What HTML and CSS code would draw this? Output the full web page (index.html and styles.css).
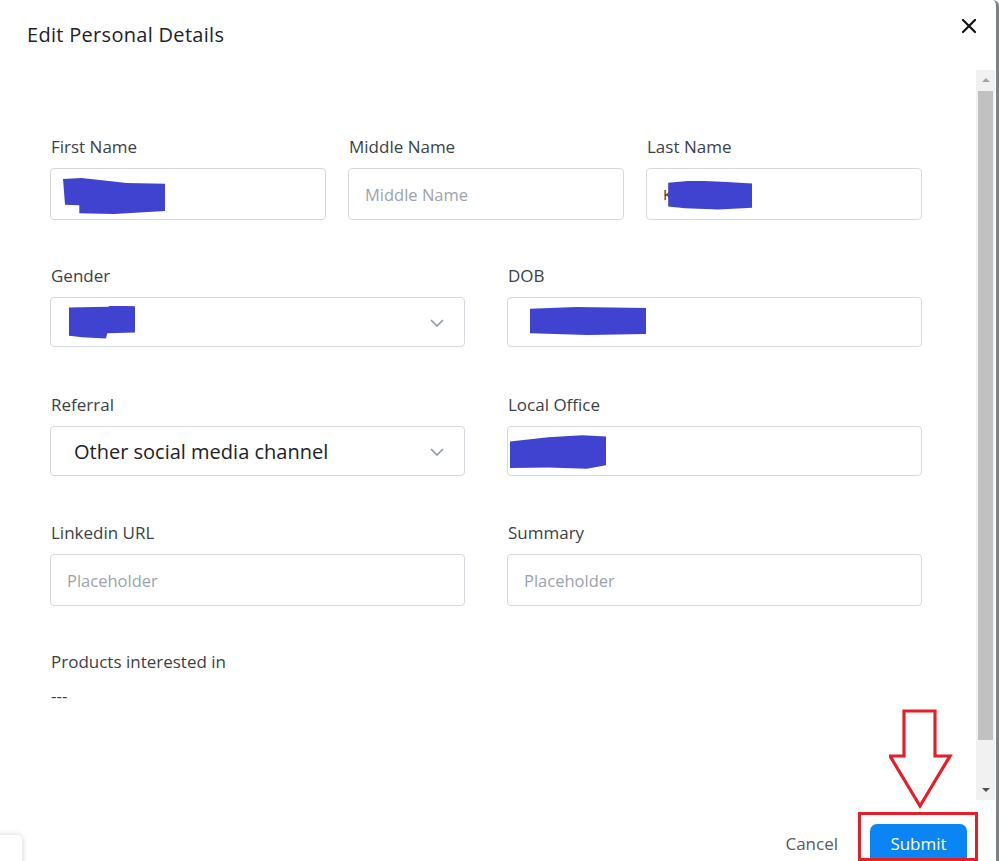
FILE: index.html
```html
<!DOCTYPE html>
<html>
<head>
<meta charset="utf-8">
<link rel="stylesheet" href="styles.css">
</head>
<body>
<div class="modal">
  <div class="modal-header">
    <h1 class="title">Edit Personal Details</h1>
    <button class="close" aria-label="Close">
      <svg width="14" height="14" viewBox="0 0 14 14"><path d="M1 1L13 13M13 1L1 13" stroke="#111" stroke-width="2.2" stroke-linecap="square"/></svg>
    </button>
  </div>
  <div class="modal-body">
    <div class="content">
      <div class="row row-3 gap-a">
        <div class="field">
          <label class="label">First Name</label>
          <div class="box"><span class="redact r-first"></span></div>
        </div>
        <div class="field">
          <label class="label">Middle Name</label>
          <div class="box"><span class="placeholder">Middle Name</span></div>
        </div>
        <div class="field">
          <label class="label">Last Name</label>
          <div class="box"><span class="glyph">K</span><span class="redact r-last"></span></div>
        </div>
      </div>
      <div class="row row-2 gap-b">
        <div class="field">
          <label class="label">Gender</label>
          <div class="box box-short select"><span class="redact r-gender"></span><svg class="chev" width="14" height="8" viewBox="0 0 14 8"><path d="M1 1L7 7L13 1" fill="none" stroke="#8e97a1" stroke-width="1.6"/></svg></div>
        </div>
        <div class="field">
          <label class="label">DOB</label>
          <div class="box box-short"><span class="redact r-dob"></span></div>
        </div>
      </div>
      <div class="row row-2 gap-c">
        <div class="field">
          <label class="label">Referral</label>
          <div class="box box-short select"><span class="value">Other social media channel</span><svg class="chev" width="14" height="8" viewBox="0 0 14 8"><path d="M1 1L7 7L13 1" fill="none" stroke="#8e97a1" stroke-width="1.6"/></svg></div>
        </div>
        <div class="field">
          <label class="label">Local Office</label>
          <div class="box box-short box-tight"><span class="redact r-office"></span></div>
        </div>
      </div>
      <div class="row row-2 gap-a">
        <div class="field">
          <label class="label">Linkedin URL</label>
          <div class="box"><span class="placeholder">Placeholder</span></div>
        </div>
        <div class="field">
          <label class="label">Summary</label>
          <div class="box"><span class="placeholder">Placeholder</span></div>
        </div>
      </div>
      <div class="field products">
        <label class="label">Products interested in</label>
        <div class="dashes">---</div>
      </div>
    </div>
    <div class="scrollbar">
      <div class="sb-btn"><span class="tri-up"></span></div>
      <div class="sb-track"><div class="sb-thumb"></div></div>
      <div class="sb-btn"><span class="tri-down"></span></div>
    </div>
  </div>
  <div class="modal-footer">
    <button class="btn-cancel">Cancel</button>
    <button class="btn-submit">Submit</button>
  </div>

  <svg class="annot-arrow" width="70" height="104" viewBox="0 0 70 104">
    <path d="M15 3H46V48H61L31 98L1 48H15Z" fill="none" stroke="#e61e28" stroke-width="3.2" stroke-linejoin="miter"/>
  </svg>
  <div class="annot-box"></div>
  <div class="corner-card"></div>
</div>
</body>
</html>
```

FILE: styles.css
```css
* { box-sizing: border-box; }
html, body { margin: 0; padding: 0; }
body {
  width: 999px;
  height: 861px;
  overflow: hidden;
  background: #ffffff;
  font-family: "Open Sans", "Noto Sans", sans-serif;
  color: #3a3e45;
}
.modal {
  position: relative;
  width: 999px;
  height: 861px;
  display: flex;
  flex-direction: column;
  border-right: 3px solid #7f8082;
  border-top-right-radius: 6px;
  background: #fff;
  overflow: hidden;
}
.modal-header {
  flex: none;
  height: 70px;
  display: flex;
  justify-content: space-between;
  align-items: flex-start;
  padding: 0 20px 0 27px;
}
.title {
  margin: 23px 0 0;
  font-size: 20px;
  line-height: 24px;
  font-weight: 500;
  letter-spacing: 0.3px;
  color: #1e222b;
}
.close {
  margin-top: 19px;
  padding: 0;
  border: 0;
  background: none;
  width: 14px;
  height: 14px;
  display: flex;
}
.modal-body {
  flex: none;
  height: 730px;
  display: flex;
}
.content {
  flex: 1;
  padding: 66px 0 0 50px;
}
.row {
  display: grid;
  width: 872px;
}
.gap-a { margin-bottom: 45px; }
.gap-b { margin-bottom: 47px; }
.gap-c { margin-bottom: 46px; }
.row-3 { grid-template-columns: repeat(3, 276px); column-gap: 22px; }
.row-2 { grid-template-columns: repeat(2, 415px); column-gap: 42px; }
.field { display: flex; flex-direction: column; }
.label {
  font-size: 17px;
  line-height: 22px;
  color: #3b3f47;
  margin: 0 0 10px 1px;
}
.box {
  height: 52px;
  border: 1px solid #d5d9de;
  border-radius: 4px;
  display: flex;
  align-items: center;
  padding: 0 14px 0 12px;
  position: relative;
}
.box-short { height: 50px; }
.box-tight { padding-left: 2px; }
.select { justify-content: space-between; padding-right: 20px; }
.placeholder {
  font-size: 16.5px;
  color: #9ba3ad;
  padding-left: 4px;
}
.value {
  font-size: 20px;
  color: #202226;
  padding-left: 11px;
}
.chev { flex: none; margin-top: 2px; }
.glyph {
  font-size: 15px;
  color: #333;
  margin-left: 4px;
  margin-right: -6px;
}
.redact {
  display: block;
  background: #3f43cf;
  filter: blur(0.7px);
}
.r-first {
  width: 102px; height: 36px; margin-top: 4px;
  clip-path: polygon(0 3%, 18% 0, 45% 8%, 62% 14%, 100% 16%, 100% 92%, 50% 100%, 16% 98%, 16% 76%, 2% 74%);
}
.r-last {
  width: 84px; height: 29px; margin-left: 2px; margin-top: 2px;
  clip-path: polygon(0 8%, 30% 0, 70% 5%, 100% 10%, 100% 94%, 60% 100%, 20% 96%, 0 90%);
}
.r-gender {
  width: 66px; height: 33px; margin-left: 6px;
  clip-path: polygon(0 6%, 60% 4%, 62% 0, 100% 2%, 100% 82%, 58% 84%, 56% 100%, 20% 96%, 0 92%);
}
.r-dob {
  width: 116px; height: 28px; margin-left: 10px; margin-top: -2px;
  clip-path: polygon(0 6%, 40% 0, 100% 4%, 100% 96%, 50% 100%, 0 94%);
}
.r-office {
  width: 96px; height: 35px; margin-top: 2px;
  clip-path: polygon(0 20%, 40% 8%, 75% 2%, 100% 6%, 100% 88%, 80% 98%, 40% 94%, 0 96%);
}
.products .label { margin-bottom: 12px; }
.dashes {
  font-size: 17px;
  line-height: 22px;
  color: #3b3f47;
  margin-left: 1px;
}
.scrollbar {
  width: 19px;
  margin-right: 1px;
  background: #f1f1f1;
  display: flex;
  flex-direction: column;
}
.sb-btn {
  height: 20px;
  display: flex;
  align-items: center;
  justify-content: center;
}
.tri-up, .tri-down {
  width: 0; height: 0;
  border-left: 4px solid transparent;
  border-right: 4px solid transparent;
}
.tri-up { border-bottom: 4px solid #a3a3a3; }
.tri-down { border-top: 4px solid #505050; }
.sb-track {
  flex: 1;
  padding: 1px 2px 0;
}
.sb-thumb {
  height: 649px;
  background: #c1c1c1;
}
.modal-footer {
  flex: none;
  height: 61px;
  display: flex;
  justify-content: flex-end;
  align-items: flex-start;
  padding: 24px 29px 0 0;
  gap: 32px;
}
.btn-cancel {
  border: 0;
  background: none;
  font-family: inherit;
  font-size: 17px;
  color: #555a60;
  padding: 0;
  margin-top: 8px;
}
.btn-submit {
  flex: none;
  border: 0;
  background: #0b84f4;
  color: #fff;
  font-family: inherit;
  font-size: 17px;
  width: 97px;
  height: 44px;
  border-radius: 7px;
  padding: 0 0 6px;
}
.annot-arrow {
  position: absolute;
  left: 889px;
  top: 708px;
}
.annot-box {
  position: absolute;
  left: 858px;
  top: 812px;
  width: 120px;
  height: 49px;
  border: 3px solid #e61e28;
}
.corner-card {
  position: absolute;
  left: -6px;
  top: 835px;
  width: 28px;
  height: 40px;
  background: #fff;
  border-radius: 5px;
  box-shadow: 0 0 6px rgba(0,0,0,0.18);
}
```
